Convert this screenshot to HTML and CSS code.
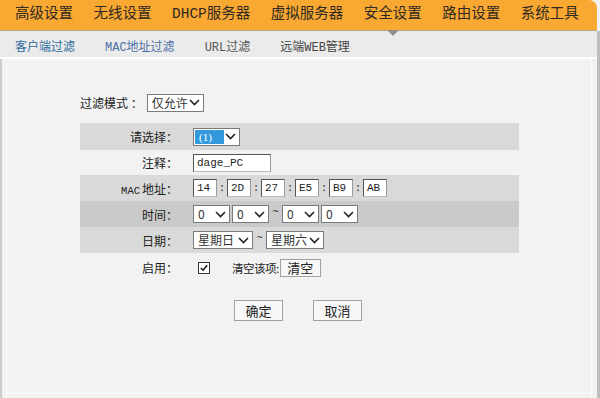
FILE: index.html
```html
<!DOCTYPE html>
<html lang="zh">
<head>
<meta charset="utf-8">
<link rel="stylesheet" href="styles.css">
</head>
<body>
<div class="page">
  <nav class="topnav">
    <span class="nav-item">高级设置</span>
    <span class="nav-item">无线设置</span>
    <span class="nav-item">DHCP服务器</span>
    <span class="nav-item">虚拟服务器</span>
    <span class="nav-item active">安全设置</span>
    <span class="nav-item">路由设置</span>
    <span class="nav-item">系统工具</span>
  </nav>
  <div class="lower">
    <div class="subnav">
      <span class="sub-item s1">客户端过滤</span>
      <span class="sub-item s2">MAC地址过滤</span>
      <span class="sub-item s3">URL过滤</span>
      <span class="sub-item s4">远端WEB管理</span>
    </div>
    <main class="panel">
      <div class="mode-row">
        <span class="mode-label">过滤模式 ：</span>
        <span class="sel w-mode"><span class="sel-text">仅允许</span><svg class="chev" viewBox="0 0 11 7"><path d="M1 1 L5.5 5.5 L10 1"/></svg></span>
      </div>

      <div class="form">
        <div class="row band">
          <span class="label">请选择：</span>
          <span class="ctrl"><span class="sel w-idx"><span class="sel-hl">(1)</span><svg class="chev" viewBox="0 0 11 7"><path d="M1 1 L5.5 5.5 L10 1"/></svg></span></span>
        </div>
        <div class="row plain">
          <span class="label">注释：</span>
          <span class="ctrl"><span class="inp w-note">dage_PC</span></span>
        </div>
        <div class="row band">
          <span class="label"><span class="lat">MAC</span>地址：</span>
          <span class="ctrl">
            <span class="inp w-mac">14</span><span class="sep">:</span>
            <span class="inp w-mac">2D</span><span class="sep">:</span>
            <span class="inp w-mac">27</span><span class="sep">:</span>
            <span class="inp w-mac">E5</span><span class="sep">:</span>
            <span class="inp w-mac">B9</span><span class="sep">:</span>
            <span class="inp w-mac">AB</span>
          </span>
        </div>
        <div class="row dark">
          <span class="label">时间：</span>
          <span class="ctrl">
            <span class="sel w-time"><span class="sel-text">0</span><svg class="chev" viewBox="0 0 11 7"><path d="M1 1 L5.5 5.5 L10 1"/></svg></span><span class="colon">:</span><span class="sel w-time"><span class="sel-text">0</span><svg class="chev" viewBox="0 0 11 7"><path d="M1 1 L5.5 5.5 L10 1"/></svg></span><span class="tilde">~</span><span class="sel w-time"><span class="sel-text">0</span><svg class="chev" viewBox="0 0 11 7"><path d="M1 1 L5.5 5.5 L10 1"/></svg></span><span class="colon">:</span><span class="sel w-time"><span class="sel-text">0</span><svg class="chev" viewBox="0 0 11 7"><path d="M1 1 L5.5 5.5 L10 1"/></svg></span>
          </span>
        </div>
        <div class="row band">
          <span class="label">日期：</span>
          <span class="ctrl">
            <span class="sel w-day"><span class="sel-text">星期日</span><svg class="chev" viewBox="0 0 11 7"><path d="M1 1 L5.5 5.5 L10 1"/></svg></span><span class="tilde">~</span><span class="sel w-day2"><span class="sel-text">星期六</span><svg class="chev" viewBox="0 0 11 7"><path d="M1 1 L5.5 5.5 L10 1"/></svg></span>
          </span>
        </div>
        <div class="row enable">
          <span class="label">启用：</span>
          <span class="ctrl">
            <span class="check"><svg viewBox="0 0 11 11"><path d="M2 5.5 L4.5 8 L9 2.5"/></svg></span>
            <span class="clear-label">清空该项:</span><span class="btn btn-clear">清空</span>
          </span>
        </div>
      </div>

      <div class="actions">
        <span class="btn btn-main">确定</span>
        <span class="btn btn-main">取消</span>
      </div>
    </main>
  </div>
</div>
</body>
</html>
```

FILE: styles.css
```css
* { box-sizing: border-box; }
html, body { margin: 0; padding: 0; }
body {
  width: 600px;
  height: 398px;
  overflow: hidden;
  background: #f2f2f2;
  font-family: "Liberation Mono", "Noto Sans CJK SC", monospace;
  font-size: 12px;
  color: #222;
}
.page { width: 600px; height: 398px; display: flex; flex-direction: column; }

.topnav {
  position: relative;
  height: 31px;
  flex: none;
  background: #f9a832;
  border-bottom: 1px solid #b9a888;
  border-top-right-radius: 8px;
  margin-right: 3px;
  display: flex;
  align-items: center;
  gap: 20.5px;
  padding: 0 0 1px 15px;
  font-size: 14.5px;
  color: #302a22;
}
.nav-item { position: relative; white-space: nowrap; line-height: 1; }
.nav-item.active::after {
  content: "";
  position: absolute;
  left: 50%;
  top: 23px;
  margin-left: -6px;
  border-left: 6px solid transparent;
  border-right: 6px solid transparent;
  border-top: 6px solid #8f8f8f;
}

.lower {
  flex: 1;
  display: flex;
  flex-direction: column;
  border-right: 3px solid #bdbdbd;
}
.subnav {
  height: 28px;
  flex: none;
  background: #ebebeb;
  border-bottom: 2px solid #fdfdfd;
  display: flex;
  align-items: center;
  gap: 30px;
  padding: 4px 0 0 15px;
  font-size: 12px;
}
.sub-item { white-space: nowrap; }
.s1 { color: #2d6a9e; }
.s2 { color: #4c70a6; }
.s3 { color: #555; }
.s4 { color: #444; }

.panel {
  flex: 1;
  background: #f2f2f2;
  border-left: 2px solid #cdcdcd;
  box-shadow: inset 4px 0 0 #f2f2f2, inset 5px 0 0 #fbfbfb, inset -5px 0 0 #f2f2f2, inset -6px 0 0 #fbfbfb, inset 0 -4px 0 #f2f2f2, inset 0 -5px 0 #fbfbfb;
  padding: 35px 0 0 78px;
}

.mode-row { display: flex; align-items: center; height: 17px; }
.mode-label { font-family: "Noto Sans CJK SC", sans-serif; margin-right: 4px; }

.form { margin-top: 12px; width: 439px; }
.row { display: flex; align-items: center; height: 26px; }
.row:first-child { height: 27px; }
.plain { height: 25px; }
.band { background: #d9d9d9; }
.dark { background: #cacaca; }
.enable { margin-top: 6px; height: 17px; }
.label {
  width: 98px;
  text-align: right;
  font-family: "Noto Sans CJK SC", sans-serif;
  font-size: 12px;
  white-space: nowrap;
  flex: none;
}
.lat { font-family: "Liberation Mono", monospace; font-size: 10.5px; margin-right: 2px; }
.ctrl { display: flex; align-items: center; margin-left: 15px; }

.sel {
  display: inline-flex;
  align-items: center;
  justify-content: space-between;
  height: 18px;
  border: 1px solid #7b7b7b;
  background: #fff;
  padding: 0 3px 0 4px;
  font-family: "Noto Sans CJK SC", sans-serif;
  font-size: 12px;
  color: #333;
  flex: none;
}
.sel-text { line-height: 1; }
.chev { width: 11px; height: 7px; }
.chev path { fill: none; stroke: #222; stroke-width: 1.6; }
.w-mode { width: 57px; }
.w-idx { width: 47px; height: 18px; padding-left: 1px; }
.sel-hl {
  width: 29px;
  height: 14px;
  background: #3399dd;
  color: #fff;
  font-family: "Liberation Serif", serif;
  font-size: 11px;
  line-height: 14px;
  padding-left: 4px;
}
.w-time { width: 37px; }
.w-day { width: 60px; }
.w-day2 { width: 58px; }

.inp {
  display: inline-flex;
  align-items: center;
  height: 18px;
  border: 1px solid #555;
  border-right-color: #999;
  border-bottom-color: #bbb;
  background: #fff;
  padding-left: 3px;
  font-family: "Liberation Mono", monospace;
  font-size: 11px;
  color: #222;
  flex: none;
}
.w-note { width: 78px; }
.w-mac { width: 24px; }
.sep { width: 10px; text-align: center; font-size: 11px; color: #333; }
.colon { width: 2px; text-align: center; font-size: 11px; }
.tilde { width: 13px; text-align: center; font-size: 11px; align-self: flex-start; line-height: 14px; }

.check {
  width: 12px;
  height: 12px;
  margin-left: 5px;
  border: 1px solid #333;
  background: #fff;
  display: inline-flex;
}
.check svg { width: 10px; height: 10px; }
.check path { fill: none; stroke: #111; stroke-width: 1.6; }
.clear-label { margin-left: 22px; font-family: "Noto Sans CJK SC", sans-serif; font-size: 11.5px; letter-spacing: -0.5px; }

.btn {
  display: inline-flex;
  align-items: center;
  justify-content: center;
  border: 1px solid #a0a0a0;
  background: #f7f7f7;
  font-family: "Noto Sans CJK SC", sans-serif;
  font-size: 13px;
  color: #222;
}
.btn-clear { width: 41px; height: 18px; margin-left: 1px; }
.actions { display: flex; gap: 30px; margin: 24px 0 0 154px; }
.btn-main { width: 49px; height: 21px; }
```
